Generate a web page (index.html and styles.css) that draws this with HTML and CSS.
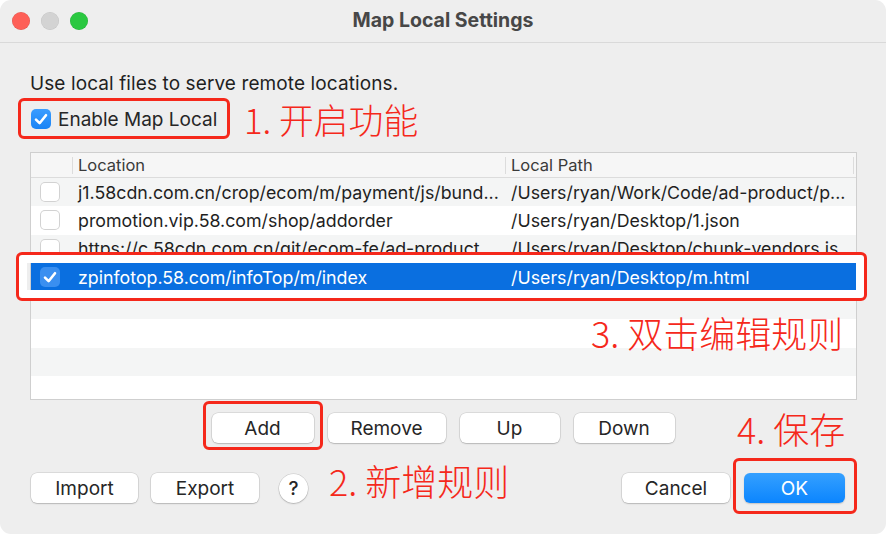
FILE: index.html
```html
<!DOCTYPE html>
<html lang="en">
<head>
<meta charset="utf-8">
<title>Map Local Settings</title>
<link rel="stylesheet" href="styles.css">
</head>
<body>
<div class="window">
  <div class="titlebar">
    <div class="lights">
      <span class="light light-close"></span>
      <span class="light light-min"></span>
      <span class="light light-max"></span>
    </div>
    <div class="title">Map Local Settings</div>
    <div></div>
  </div>

  <div class="content">
    <p class="desc">Use local files to serve remote locations.</p>
    <label class="enable">
      <span class="cb cb-on"><svg viewBox="0 0 20 20" width="20" height="20"><path d="M5 10.6 L8.6 14.2 L15 6.2" fill="none" stroke="#fff" stroke-width="2.6" stroke-linecap="round" stroke-linejoin="round"/></svg></span>
      <span>Enable Map Local</span>
    </label>

    <div class="table">
      <div class="thead">
        <div class="th th-check"></div>
        <div class="th">Location</div>
        <div class="th th-last">Local Path</div>
      </div>
      <div class="row row-alt">
        <div class="cell-check"><span class="cb cb-off"></span></div>
        <div class="cell">j1.58cdn.com.cn/crop/ecom/m/payment/js/bund...</div>
        <div class="cell">/Users/ryan/Work/Code/ad-product/p...</div>
      </div>
      <div class="row">
        <div class="cell-check"><span class="cb cb-off"></span></div>
        <div class="cell">promotion.vip.58.com/shop/addorder</div>
        <div class="cell">/Users/ryan/Desktop/1.json</div>
      </div>
      <div class="row row-alt">
        <div class="cell-check"><span class="cb cb-off"></span></div>
        <div class="cell">https://c.58cdn.com.cn/git/ecom-fe/ad-product...</div>
        <div class="cell">/Users/ryan/Desktop/chunk-vendors.js</div>
      </div>
      <div class="row row-selected">
        <div class="cell-check"><span class="cb cb-sel"><svg viewBox="0 0 20 20" width="20" height="20"><path d="M5 10.6 L8.6 14.2 L15 6.2" fill="none" stroke="#fff" stroke-width="2.6" stroke-linecap="round" stroke-linejoin="round"/></svg></span></div>
        <div class="cell">zpinfotop.58.com/infoTop/m/index</div>
        <div class="cell">/Users/ryan/Desktop/m.html</div>
      </div>
      <div class="row row-alt"></div>
      <div class="row"></div>
      <div class="row row-alt"></div>
      <div class="row row-short"></div>
    </div>

    <div class="actions">
      <button class="btn btn-add">Add</button>
      <button class="btn btn-remove">Remove</button>
      <button class="btn btn-up">Up</button>
      <button class="btn btn-down">Down</button>
    </div>

    <div class="footer">
      <div class="footer-left">
        <button class="btn btn-import">Import</button>
        <button class="btn btn-export">Export</button>
        <button class="help">?</button>
      </div>
      <div class="footer-right">
        <button class="btn btn-cancel">Cancel</button>
        <button class="btn btn-ok">OK</button>
      </div>
    </div>
  </div>

  <div class="mark mark-enable"></div>
  <div class="note note-1">1. 开启功能</div>
  <div class="mark mark-row"></div>
  <div class="note note-3">3. 双击编辑规则</div>
  <div class="mark mark-add"></div>
  <div class="note note-4">4. 保存</div>
  <div class="mark mark-ok"></div>
  <div class="note note-2">2. 新增规则</div>
</div>
</body>
</html>
```

FILE: styles.css
```css
* { box-sizing: border-box; }

html, body {
  margin: 0;
  padding: 0;
  background: #ffffff;
}

body {
  font-family: Inter, "Noto Sans", "Liberation Sans", sans-serif;
  color: #262626;
}

.window {
  position: relative;
  width: 886px;
  height: 534px;
  background: #eeeeee;
  border-radius: 11px;
  overflow: hidden;
}

.titlebar {
  height: 43px;
  border-bottom: 1px solid #d9d9d9;
  display: grid;
  grid-template-columns: 1fr auto 1fr;
  align-items: center;
}

.lights {
  display: flex;
  gap: 11px;
  padding-left: 12px;
}

.light {
  width: 18px;
  height: 18px;
  border-radius: 50%;
  display: block;
}
.light-close { background: #fe5f57; box-shadow: inset 0 0 0 0.5px rgba(0,0,0,0.12); }
.light-min { background: #d3d3d3; box-shadow: inset 0 0 0 0.5px rgba(0,0,0,0.08); }
.light-max { background: #2ac840; box-shadow: inset 0 0 0 0.5px rgba(0,0,0,0.12); }

.title {
  font-size: 19.5px;
  font-weight: 700;
  color: #474747;
  margin-top: -2px;
}

.content {
  display: flex;
  flex-direction: column;
  padding: 0 29px 0 30px;
}

.desc {
  margin: 31px 0 0;
  font-size: 19px;
  line-height: 20px;
  color: #1f1f1f;
  letter-spacing: 0.1px;
}

.enable {
  margin-top: 14px;
  display: flex;
  align-items: center;
  gap: 7px;
  height: 22px;
  font-size: 19px;
  color: #262626;
  padding-left: 1px;
}

.cb {
  width: 20px;
  height: 20px;
  border-radius: 5px;
  display: block;
  flex: none;
}
.cb svg { display: block; }
.cb-on {
  background: linear-gradient(#3b9dff, #1a84f5);
}
.cb-off {
  background: #ffffff;
  box-shadow: inset 0 0 0 1px #d2d2d2;
}
.cb-sel {
  background: #3a8ff0;
}

.table {
  margin-top: 22px;
  width: 827px;
  height: 248px;
  background: #ffffff;
  border: 1px solid #cfcfcf;
  overflow: hidden;
  font-size: 17.8px;
}

.thead {
  display: grid;
  grid-template-columns: 41px 433px 1fr;
  height: 25px;
  background: #f6f6f6;
  border-bottom: 1px solid #dcdcdc;
  align-items: center;
}

.th {
  height: 17px;
  line-height: 17px;
  font-size: 16.5px;
  color: #3a3a3a;
  padding-left: 5px;
  border-left: 1px solid #dcdcdc;
}
.th-check { border-left: none; }
.th-last { border-right: 1px solid #dcdcdc; margin-right: 2px; }

.row {
  display: grid;
  grid-template-columns: 41px 433px 1fr;
  height: 28.3px;
  align-items: center;
  color: #1f1f1f;
}
.row-alt { background: #f4f5f5; }
.row-short { height: 24px; }
.row-selected {
  background: #0a6fe0;
  color: #ffffff;
}

.cell-check {
  padding-left: 9px;
}

.cell {
  padding-left: 6px;
  white-space: nowrap;
  overflow: hidden;
}

.actions {
  margin-top: 13px;
  display: flex;
  justify-content: center;
  gap: 14px;
  padding-right: 1px;
}

.btn {
  height: 30px;
  border: none;
  border-radius: 6px;
  background: #ffffff;
  box-shadow: 0 0 0 0.5px rgba(0,0,0,0.16), 0 1px 1.5px rgba(0,0,0,0.16);
  font-family: Inter, "Noto Sans", "Liberation Sans", sans-serif;
  font-size: 19px;
  color: #262626;
  padding: 0;
}
.btn-add { width: 102px; }
.btn-remove { width: 118px; }
.btn-up { width: 100px; }
.btn-down { width: 101px; }
.btn-import { width: 107px; }
.btn-export { width: 108px; }
.btn-cancel { width: 108px; }
.btn-ok {
  width: 101px;
  color: #ffffff;
  background: linear-gradient(#35a0ff, #0b85fe);
  box-shadow: 0 1px 1.5px rgba(0,0,0,0.18);
}

.footer {
  margin-top: 30px;
  display: flex;
  justify-content: space-between;
  padding-left: 1px;
  padding-right: 12px;
}

.footer-left, .footer-right {
  display: flex;
  align-items: center;
}
.footer-left { gap: 13px; }
.footer-right { gap: 14px; }

.help {
  margin-left: 7px;
  width: 29px;
  height: 29px;
  border-radius: 50%;
  border: none;
  background: #ffffff;
  box-shadow: 0 0 0 0.5px rgba(0,0,0,0.16), 0 1px 1.5px rgba(0,0,0,0.18);
  font-family: Inter, "Liberation Sans", sans-serif;
  font-size: 19px;
  font-weight: 500;
  color: #262626;
  padding: 0;
}

/* annotation overlay */
.mark {
  position: absolute;
  border: 3px solid #f5281b;
  border-radius: 6px;
}
.mark-enable { left: 18px; top: 98px; width: 212px; height: 41px; }
.mark-row {
  left: 16px; top: 252px; width: 851px; height: 49px;
  box-shadow: inset 0 0 0 8px #ffffff;
}
.mark-add { left: 203px; top: 401px; width: 120px; height: 49px; }
.mark-ok { left: 733px; top: 458px; width: 124px; height: 56px; }

.note {
  position: absolute;
  font-family: "Noto Sans CJK SC", "Noto Sans", sans-serif;
  font-weight: 300;
  font-size: 36px;
  line-height: 40px;
  color: #f5281b;
  white-space: nowrap;
}
.note-1 { left: 244px; top: 99px; font-size: 34.8px; }
.note-3 { left: 591px; top: 312px; }
.note-4 { left: 737px; top: 408px; }
.note-2 { left: 329px; top: 460px; }
```
